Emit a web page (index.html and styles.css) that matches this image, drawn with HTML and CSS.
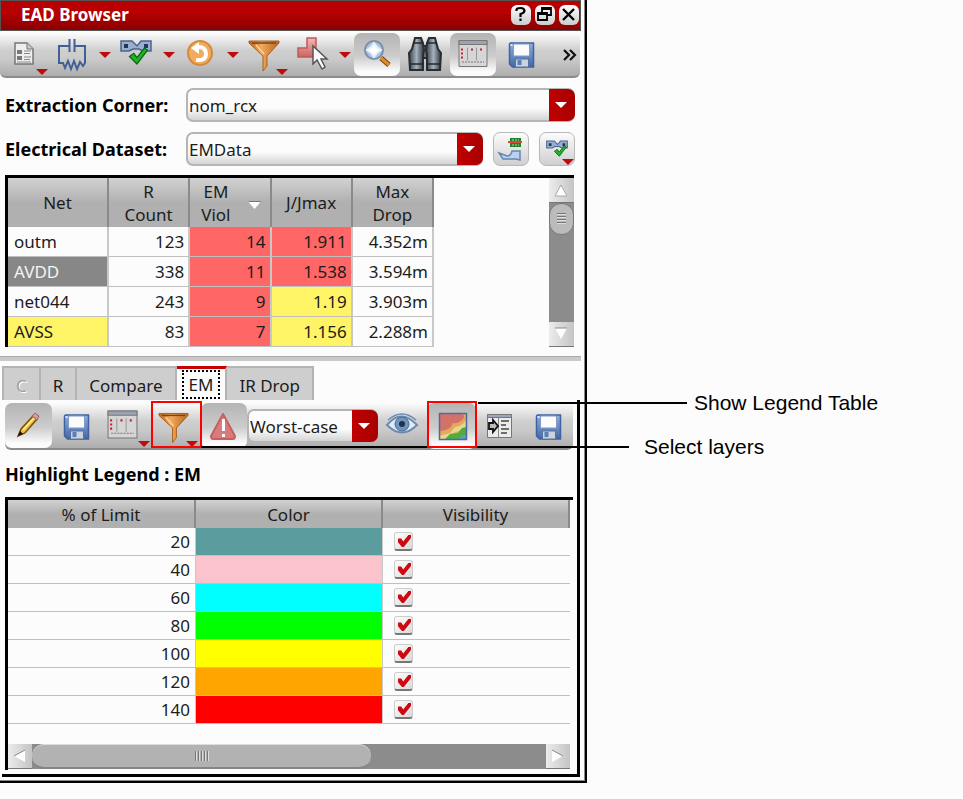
FILE: index.html
```html
<!DOCTYPE html>
<html lang="en">
<head>
<meta charset="utf-8">
<title>EAD Browser</title>
<link rel="stylesheet" href="styles.css">
</head>
<body>
<svg class="defs" aria-hidden="true">
  <defs>
    <linearGradient id="gOrange" x1="0" x2="1" y1="0" y2="0"><stop offset="0" stop-color="#b8651a"/><stop offset=".4" stop-color="#f3a95b"/><stop offset="1" stop-color="#b9681f"/></linearGradient>
    <linearGradient id="gBlue" x1="0" x2="0" y1="0" y2="1"><stop offset="0" stop-color="#8fb0da"/><stop offset="1" stop-color="#4468a4"/></linearGradient>
    <linearGradient id="gBarrel" x1="0" x2="1" y1="0" y2="0"><stop offset="0" stop-color="#3a4046"/><stop offset=".5" stop-color="#a3b1bd"/><stop offset="1" stop-color="#30363c"/></linearGradient>
    <linearGradient id="gRed" x1="0" x2="0" y1="0" y2="1"><stop offset="0" stop-color="#f2b6b4"/><stop offset="1" stop-color="#cf6262"/></linearGradient>
    <symbol id="drop" viewBox="0 0 12 6"><path d="M0 0h12L6 6z" fill="#bd0c10"/></symbol>
    <symbol id="save" viewBox="0 0 26 26">
      <path d="M2 1h23v24H4l-3-3V2z" fill="url(#gBlue)" stroke="#3f62a0" stroke-width="1.5"/>
      <path d="M5 2h16v12H5z" fill="#fbfbfb" stroke="#7f9ac8"/>
      <path d="M7 17h13v8H7z" fill="#ccd3dc" stroke="#5573a5"/><path d="M9 18h4v5H9z" fill="#5a7fb8"/><path d="M2 2h2v2H2z" fill="#dbe7f8"/>
    </symbol>
    <symbol id="funnel" viewBox="0 0 32 32">
      <path d="M1 1h30v2L19 16v10l-4 5v-15L1 3z" fill="url(#gOrange)" stroke="#a8601f" stroke-width="1"/>
      <path d="M4 3h24" stroke="#7f4210" stroke-width="1.5"/><path d="M8 5l8 9" stroke="#ffd39c" stroke-width="1.5"/>
    </symbol>
    <symbol id="panel" viewBox="0 0 30 28">
      <path d="M1 1h28v26H1z" fill="#d6d6d6" stroke="#777"/><path d="M1 1h28v4H1z" fill="#9aa4b5" stroke="#777"/>
      <path d="M9.500 8v13M18.500 8v13" stroke="#999"/><path d="M4 22.500h22" stroke="#777" stroke-dasharray="2 1"/>
      <path d="M3 9h2v2H3zM3 13h2v2H3zM3 17h2v2H3zM13 9h2v2h-2zM22 9h2v2h-2z" fill="#c22"/>
    </symbol>
    <symbol id="tick" viewBox="0 0 20 17"><path d="M2 9l4-3 3 4 7-9 3 2L9 16z" fill="#21b428" stroke="#0b6612" stroke-width="1.200"/></symbol>
    <symbol id="net" viewBox="0 0 32 12">
      <path d="M1 1h11l5 5 4-5h10v10h-8l-4-2h-6l-4 2H1z" fill="#9aafd0" stroke="#4a648f" stroke-width="1.500"/><path d="M4 4h4v4H4zM24 4h4v4h-4z" fill="#253756"/>
    </symbol>
  </defs>
</svg>

<main class="page">
  <section class="window">
    <header class="titlebar">
      <h1>EAD Browser</h1>
      <button class="winbtn" type="button" aria-label="Help"><svg width="19" height="19" viewBox="0 0 19 19"><path d="M5.500 6V4.500Q6 3 9.500 3t4 2.500Q13.500 8 9.500 9v3M9.500 13.500v2.500" fill="none" stroke="#000" stroke-width="2.200"/></svg></button>
      <button class="winbtn" type="button" aria-label="Restore"><svg width="19" height="19" viewBox="0 0 19 19"><path d="M7 7V3h9v7h-4M7 4h9M3 8h9v7H3zM3 9h9" fill="none" stroke="#000" stroke-width="1.800"/></svg></button>
      <button class="winbtn" type="button" aria-label="Close"><svg width="19" height="19" viewBox="0 0 19 19"><path d="M4 4l11 11M15 4L4 15" stroke="#000" stroke-width="2.400"/></svg></button>
    </header>

    <div class="toolbar toolbar-main">
      <button class="tool" type="button" aria-label="Report"><svg width="52" height="44" viewBox="0 0 52 44">
        <path d="M15 10h12l6 6v15H15z" fill="#eee" stroke="#777" stroke-width="1.500"/><path d="M27 10v6h6" fill="#ccc" stroke="#777"/>
        <path d="M17 17h5v4h-5zM17 23h5v4h-5z" fill="#777"/><path d="M24 18h7M24 20.500h6M24 24h7M24 26.500h6M17 29h14" stroke="#888"/>
        <use href="#drop" x="36" y="36" width="12" height="6"/></svg></button>
      <button class="tool" type="button" aria-label="Parasitics"><svg width="64" height="44" viewBox="52 0 64 44">
        <path d="M69.500 6v13M74.500 6v13M69 13H59v17h4l2 5 3-7 3 8 3-8 3 8 3-7 3 4 2-3V13H75" fill="none" stroke="#416096" stroke-width="2"/>
        <use href="#drop" x="99" y="19" width="12" height="6"/></svg></button>
      <button class="tool" type="button" aria-label="Check nets"><svg width="64" height="44" viewBox="116 0 64 44">
        <use href="#net" x="120" y="7" width="32" height="12"/><use href="#tick" x="127" y="14" width="22" height="18"/>
        <use href="#drop" x="163" y="19" width="12" height="6"/></svg></button>
      <button class="tool" type="button" aria-label="Refresh"><svg width="64" height="44" viewBox="180 0 64 44">
        <circle cx="200" cy="20" r="12" fill="#f0ab5e" stroke="#d58a3c" stroke-width="2"/>
        <path d="M196 27q10 1 10-6t-8-7" fill="none" stroke="#fff" stroke-width="4"/><path d="M191 15l8-6v12z" fill="#fff"/>
        <use href="#drop" x="227" y="19" width="12" height="6"/></svg></button>
      <button class="tool" type="button" aria-label="Filter"><svg width="48" height="44" viewBox="244 0 48 44">
        <use href="#funnel" x="248" y="7" width="32" height="32"/><use href="#drop" x="276" y="36" width="12" height="6"/></svg></button>
      <button class="tool" type="button" aria-label="Select shape"><svg width="62" height="44" viewBox="292 0 62 44">
        <path d="M307 5h9v19h-18v-9h9z" fill="url(#gRed)" stroke="#c05a5a" stroke-width="1.500"/>
        <path d="M313 13v18l4-4 5 9 3-2-4-8h6z" fill="#fbfbfb" stroke="#555" stroke-width="1.500"/>
        <use href="#drop" x="339" y="19" width="12" height="6"/></svg></button>
      <button class="tool pressed" type="button" aria-label="Zoom"><svg width="46" height="44" viewBox="354 0 46 44">
        <path d="M381 25l8 7" stroke="#7e4310" stroke-width="5"/><path d="M381 25l8 7" stroke="#e28a28" stroke-width="3"/>
        <circle cx="374" cy="17" r="9" fill="#a9c3e2" stroke="#7c8ea5" stroke-width="2"/>
        <path d="M374 10l3 4 4 3-4 3-3 4-3-4-4-3 4-3z" fill="#fff" stroke="#e6effa" stroke-width="2"/></svg></button>
      <button class="tool" type="button" aria-label="Find"><svg width="50" height="44" viewBox="400 0 50 44">
        <g stroke="#292d31" stroke-width="2"><path d="M421 13h8v12h-8z" fill="#68727c"/>
        <path d="M415 5h6l2 5 1 7-1 5v15h-13l-1-17 3-4z" fill="url(#gBarrel)"/><path d="M429 5h6l3 11 3 4-1 17h-13V22l-1-5 1-7z" fill="url(#gBarrel)"/></g>
        <path d="M413 10h9M428 10h9M410 31h13M427 31h13" stroke="#23282c" stroke-width="1.500"/></svg></button>
      <button class="tool pressed" type="button" aria-label="Show table"><svg width="46" height="44" viewBox="450 0 46 44"><use href="#panel" x="458" y="6" width="30" height="29"/></svg></button>
      <button class="tool" type="button" aria-label="Save"><svg width="50" height="44" viewBox="496 0 50 44"><use href="#save" x="508" y="9" width="27" height="26"/></svg></button>
      <button class="tool more" type="button" aria-label="More tools"><svg width="18" height="44" viewBox="0 0 18 44"><path d="M2 17l5 5-5 5M8 17l5 5-5 5" fill="none" stroke="#111" stroke-width="2.200"/></svg></button>
    </div>

    <div class="field">
      <label for="corner">Extraction Corner:</label>
      <span class="combo"><select id="corner"><option>nom_rcx</option></select></span>
    </div>
    <div class="field">
      <label for="dataset">Electrical Dataset:</label>
      <span class="combo"><select id="dataset"><option>EMData</option></select></span>
      <button class="sidebtn" type="button" aria-label="Load dataset"><svg width="34" height="34" viewBox="0 0 34 34">
        <path d="M16 5h11v9H16z" fill="#24812a"/><path d="M18 7h7M18 12h7" stroke="#a7e29c" stroke-dasharray="2 1"/><path d="M14 9h14" stroke="#d44" stroke-width="2"/>
        <path d="M5 20l8 3q4 0 5-5h8v9l-4-1H9z" fill="#b9d2ef" stroke="#6687b1" stroke-width="1.500"/></svg></button>
      <button class="sidebtn" type="button" aria-label="Check dataset"><svg width="34" height="34" viewBox="0 0 34 34">
        <use href="#net" x="6" y="7" width="22" height="9"/><use href="#tick" x="12" y="12" width="16" height="12"/><use href="#drop" x="22" y="26" width="12" height="6"/></svg></button>
    </div>

    <div class="frame net-frame">
      <table class="grid nets">
        <thead><tr><th>Net</th><th>R<br>Count</th><th class="sorted">EM<br>Viol</th><th>J/Jmax</th><th>Max<br>Drop</th></tr></thead>
        <tbody>
          <tr><td>outm</td><td>123</td><td class="bad">14</td><td class="bad">1.911</td><td>4.352m</td></tr>
          <tr><td class="selected">AVDD</td><td>338</td><td class="bad">11</td><td class="bad">1.538</td><td>3.594m</td></tr>
          <tr><td>net044</td><td>243</td><td class="bad">9</td><td class="warn">1.19</td><td>3.903m</td></tr>
          <tr><td class="warn">AVSS</td><td>83</td><td class="bad">7</td><td class="warn">1.156</td><td>2.288m</td></tr>
        </tbody>
      </table>
      <div class="vscroll">
        <button type="button" aria-label="Scroll up"><svg width="24" height="24" viewBox="0 0 24 24"><path d="M6 18l6-11 6 11z" fill="#fff" stroke="#aaa"/></svg></button>
        <div class="vtrack"><div class="vthumb"></div></div>
        <button type="button" aria-label="Scroll down"><svg width="24" height="24" viewBox="0 0 24 24"><path d="M6 6l6 11 6-11z" fill="#fff"/><path d="M6 6h12" stroke="#888"/></svg></button>
      </div>
    </div>

    <div class="splitter"></div>

    <nav class="tabs">
      <button class="tab" type="button" disabled>C</button>
      <button class="tab" type="button">R</button>
      <button class="tab" type="button">Compare</button>
      <button class="tab active" type="button"><span>EM</span></button>
      <button class="tab" type="button">IR Drop</button>
    </nav>

    <div class="pane">
      <div class="toolbar toolbar-em">
        <button class="tool pressed" type="button" aria-label="Edit"><svg width="47" height="46" viewBox="5 0 47 46">
          <path d="M18 33l3-7L33 13l4 3-12 14z" fill="#f0bd36" stroke="#775019" stroke-width="1.500"/><path d="M23 27l11-12" stroke="#fff0a0" stroke-width="1.500"/><path d="M32 13l3-3 4 3-2 4z" fill="#d99a94" stroke="#966"/><path d="M18 33l2-5 3 3z" fill="#111"/></svg></button>
        <button class="tool" type="button" aria-label="Save"><svg width="52" height="46" viewBox="52 0 52 46"><use href="#save" x="63" y="11" width="27" height="26"/></svg></button>
        <button class="tool" type="button" aria-label="Table columns"><svg width="47" height="46" viewBox="104 0 47 46"><use href="#panel" x="107" y="7" width="31" height="29"/><use href="#drop" x="138" y="38" width="12" height="6"/></svg></button>
        <div class="marked"><button class="tool" type="button" aria-label="Select layers"><svg width="50" height="46" viewBox="151 0 50 46"><use href="#funnel" x="158" y="9" width="31" height="32"/><use href="#drop" x="186" y="38" width="12" height="6"/></svg></button>
          <div class="callout callout-layers">Select layers</div></div>
        <button class="tool pressed" type="button" aria-label="Violations"><svg width="46" height="46" viewBox="201 0 46 46">
          <path d="M223 11l12 22q0 3-2 3h-20q-2 0-2-3z" fill="#d87b7b" stroke="#c46262" stroke-width="2" stroke-linejoin="round"/><path d="M223.500 16v12M223.500 31v3" stroke="#fff" stroke-width="3"/></svg></button>
        <span class="combo"><select id="mode" aria-label="Analysis mode"><option>Worst-case</option></select></span>
        <button class="tool" type="button" aria-label="Visibility"><svg width="49" height="46" viewBox="378 0 49 46">
          <path d="M387 22q14-17 30 0q-15 15-30 0z" fill="#e2ebf3" stroke="#6c8bad" stroke-width="2"/><circle cx="402" cy="21" r="7" fill="#7195bd" stroke="#456b99"/><circle cx="402" cy="21" r="3" fill="#1d3453"/><path d="M388 17q14-12 28 0" fill="none" stroke="#6c8bad" stroke-width="1.500"/></svg></button>
        <div class="marked short"><button class="tool pressed" type="button" aria-label="Show Legend Table"><svg width="49" height="46" viewBox="427 0 49 46">
          <path d="M439 10h28v27h-28z" fill="#e3a95a"/><path d="M439 10h22q5 2 2 6-4 5-10 4-3 8-14 8z" fill="#d4726a"/><path d="M467 15q-3 8-12 9l-5 6-11 3v4h7l5-6 10-4 6-4z" fill="#ecd48e"/><path d="M444 37l6-6 8-1 4-5 5-1v13z" fill="#4eae3d"/><path d="M458 37l4-5h5v5z" fill="#6596c0"/><path d="M439.500 10.500h27v26h-27z" fill="none" stroke="#4e68a0" stroke-width="1.500"/></svg></button>
          <div class="callout callout-legend">Show Legend Table</div></div>
        <button class="tool" type="button" aria-label="Export report"><svg width="49" height="46" viewBox="476 0 49 46">
          <path d="M487.500 11.500h24v23h-24z" fill="#ececec" stroke="#777"/><path d="M487.500 11.500h24v3h-24z" fill="#9ba7b9" stroke="#777"/><path d="M498.500 15v19" stroke="#888"/><path d="M501 18h8M501 22h5M501 26h8M501 30h6" stroke="#444" stroke-width="1.500"/>
          <path d="M489 20h4v-3l5 6-5 6v-3h-4z" fill="#bbb" stroke="#111" stroke-width="1.800"/></svg></button>
        <button class="tool" type="button" aria-label="Save legend"><svg width="48" height="46" viewBox="525 0 48 46"><use href="#save" x="535" y="11" width="27" height="26"/></svg></button>
      </div>

      <h2>Highlight Legend : EM</h2>

      <div class="frame legend-frame">
        <table class="grid legend">
          <thead><tr><th>% of Limit</th><th>Color</th><th>Visibility</th></tr></thead>
          <tbody>
            <tr><td>20</td><td class="teal"></td><td><input type="checkbox" checked aria-label="Show 20"></td></tr>
            <tr><td>40</td><td class="pink"></td><td><input type="checkbox" checked aria-label="Show 40"></td></tr>
            <tr><td>60</td><td class="cyan"></td><td><input type="checkbox" checked aria-label="Show 60"></td></tr>
            <tr><td>80</td><td class="green"></td><td><input type="checkbox" checked aria-label="Show 80"></td></tr>
            <tr><td>100</td><td class="yellow"></td><td><input type="checkbox" checked aria-label="Show 100"></td></tr>
            <tr><td>120</td><td class="orange"></td><td><input type="checkbox" checked aria-label="Show 120"></td></tr>
            <tr><td>140</td><td class="red"></td><td><input type="checkbox" checked aria-label="Show 140"></td></tr>
          </tbody>
        </table>
        <div class="hscroll">
          <button type="button" aria-label="Scroll left"><svg width="24" height="24" viewBox="0 0 24 24"><path d="M17 6L6 12l11 6z" fill="#fff"/><path d="M17 6L6 12" stroke="#888"/></svg></button>
          <div class="htrack"><div class="hthumb"></div></div>
          <button type="button" aria-label="Scroll right"><svg width="24" height="24" viewBox="0 0 24 24"><path d="M6 6l11 6-11 6z" fill="#fff"/><path d="M6 6l11 6" stroke="#888"/></svg></button>
        </div>
      </div>
    </div>
  </section>
</main>
</body>
</html>
```
FILE: styles.css
```css
* { box-sizing: border-box; }

body {
  margin: 0;
  background: #fcfcfc;
  color: #1c1c1c;
  font: 17px/23px "Noto Sans", "Open Sans", sans-serif;
}

button, select { font: inherit; color: inherit; }
button { margin: 0; padding: 0; border: 0; background: none; }
svg { display: block; }
.defs { position: absolute; width: 0; height: 0; }

.page {
  display: grid;
  grid-template-columns: minmax(0, 587px) 1fr;
  align-items: start;
}

.window {
  border-right: 2px solid #000;
  border-bottom: 2px solid #000;
  box-shadow: inset -1px -1px #888;
  padding-bottom: 4px;
}

/* Title bar */
.titlebar {
  display: flex;
  align-items: center;
  gap: 4px;
  height: 31px;
  margin-right: 4px;
  padding: 0 1px 2px 20px;
  border: 1px solid #555;
  background: linear-gradient(#b80000 40%, #8a0000);
}
.titlebar h1 {
  flex: 1;
  margin: 0;
  color: #fff;
  font-size: 17px;
  line-height: 23px;
}
.winbtn {
  width: 20px;
  height: 20px;
  border-radius: 6px;
  background: linear-gradient(#fff, #ccc);
}

/* Toolbars */
.toolbar {
  display: flex;
  border-bottom: 2px solid #8c8c8c;
  border-radius: 0 0 6px 6px;
  background: linear-gradient(#fcfcfc, #cfcfcf 40%, #cacaca 60%, #adadad);
}
.toolbar-main { height: 45px; margin: 2px 5px 10px 0; }
.toolbar-em { height: 47px; margin: 0 4px 0 3px; }
.tool { flex: none; }
.pressed {
  border-radius: 7px;
  background: linear-gradient(#b4b4b4, #cdcdcd 55%, #fcfcfc 90%);
}
.more { margin-left: auto; }

/* Form rows */
.field {
  display: flex;
  align-items: center;
  gap: 10px;
  margin: 0 10px 10px 5px;
}
.field label {
  width: 171px;
  color: #000;
  font-size: 18px;
  font-weight: bold;
}
.combo {
  position: relative;
  flex: 1;
  height: 34px;
}
.combo select {
  width: 100%;
  height: 100%;
  padding: 0 30px 0 1px;
  appearance: none;
  border: 2px solid #b5b5b5;
  border-radius: 7px;
  background: linear-gradient(#fcfcfc 60%, #d4d4d4);
}
.combo::before {
  content: "";
  position: absolute;
  inset: 1px 0 1px auto;
  width: 26px;
  border-radius: 0 7px 7px 0;
  background: linear-gradient(90deg, #c00000, #a80000);
  pointer-events: none;
}
.combo::after {
  content: "";
  position: absolute;
  top: 14px;
  right: 8px;
  width: 12px;
  height: 6px;
  background: #fff;
  clip-path: polygon(0 0, 100% 0, 50% 100%);
  pointer-events: none;
}
.toolbar .combo { margin-top: 6px; }
.sidebtn {
  display: grid;
  place-items: center;
  width: 36px;
  height: 34px;
  border: 1px solid #b8b8b8;
  border-radius: 7px;
  background: linear-gradient(#fcfcfc, #cfcfcf);
}

/* Tables */
.frame {
  border-top: 3px solid #000;
  border-left: 3px solid #000;
}
.grid {
  border-collapse: separate;
  border-spacing: 0;
  table-layout: fixed;
}
.grid th {
  padding: 0;
  border-right: 2px solid #8a8a8a;
  background: linear-gradient(#d2d2d2, #b0b0b0 50%);
  font-weight: normal;
}
.grid td {
  border-right: 2px solid #c8c8c8;
  border-bottom: 1px solid #c0c0c0;
  text-align: right;
}

.net-frame {
  display: flex;
  justify-content: space-between;
  margin: -1px 11px 9px 5px;
}
.nets { width: 426px; }
.nets th { height: 49px; }
.nets td { height: 30px; padding: 0 4px; }
.nets th:first-child { width: 101px; }
.nets td:first-child { padding-left: 6px; text-align: left; }
.nets th.sorted { position: relative; padding-right: 28px; }
.sorted::before,
.sorted::after {
  content: "";
  position: absolute;
  top: 23px;
  right: 9px;
  width: 12px;
  height: 1px;
  background: #777;
}
.sorted::after {
  top: 24px;
  height: 7px;
  background: #fff;
  clip-path: polygon(0 0, 100% 0, 50% 100%);
}
.nets .bad { background: #ff6666; }
.nets .warn { background: #fff466; }
.nets .selected { background: #878787; color: #f4f4f4; }

/* Scroll bars */
.vscroll { display: flex; flex-direction: column; width: 25px; }
.vscroll button, .hscroll button {
  border-bottom: 1px solid #777;
  background: linear-gradient(90deg, #ececec, #c4c4c4);
}
.vtrack, .htrack { flex: 1; background: #8c8c8c; }
.vthumb {
  height: 32px;
  border: 1px solid #777;
  border-radius: 12px;
  background:
    repeating-linear-gradient(#777 0 1px, #ddd 1px 2px, #bbb 2px 3px) center / 9px 12px no-repeat,
    #bbb;
}
.hscroll { display: flex; height: 25px; margin-top: 20px; }
.hthumb {
  width: 66%;
  height: 25px;
  border-top: 1px solid #ddd;
  border-bottom: 2px solid #858585;
  border-radius: 12px;
  background:
    repeating-linear-gradient(90deg, #777 0 1px, #ddd 1px 2px, #b2b2b2 2px 3px) center / 14px 10px no-repeat,
    #b2b2b2;
}

.splitter {
  height: 5px;
  margin-right: 4px;
  border-top: 1px solid #aaa;
  background: #cacaca;
}

/* Tabs */
.tabs {
  display: flex;
  height: 34px;
  margin: 5px 0 0 2px;
}
.tab {
  padding: 3px 12px 0;
  border-top: 2px solid #b4b4b4;
  border-right: 2px solid #b4b4b4;
  background: #cecece;
}
.tab:first-child { border-left: 2px solid #b4b4b4; }
.tab:disabled { color: #a0a0a0; text-shadow: 1px 1px #fff; }
.tab.active {
  padding: 0 5px;
  border-top: 3px solid #c80000;
  background: #fcfcfc;
}
.tab.active span {
  display: block;
  padding: 1px 5px;
  border: 2px dotted #000;
}

/* EM pane */
.pane {
  margin: 0 5px 0 2px;
  padding: 3px 0 4px;
  border-right: 3px solid #000;
  border-bottom: 3px solid #000;
}
.pane h2 {
  margin: 0;
  padding: 2px 0 0 3px;
  color: #000;
  font-size: 18px;
  line-height: 45px;
}
.legend-frame { margin: 0 4px 0 3px; padding: 0 3px 1px 0; }
.legend { width: 100%; }
.legend th { height: 28px; }
.legend th:first-child { width: 188px; }
.legend td { height: 28px; padding: 0 5px; border-right-width: 1px; }
.legend td:last-child {
  border-right: 0;
  padding-left: 11px;
  text-align: left;
}
.teal { background: #5b9c9e; }
.pink { background: #fbc3cc; }
.cyan { background: #00ffff; }
.green { background: #00ff00; }
.yellow { background: #ffff00; }
.orange { background: #ffa500; }
.red { background: #ff0000; }

input[type="checkbox"] {
  display: block;
  width: 19px;
  height: 19px;
  margin: 0;
  appearance: none;
  border: 1px solid #ccc;
  border-bottom: 2px solid #777;
  border-radius: 3px;
  background: linear-gradient(135deg, #fff, #d8d8d8);
}
input[type="checkbox"]:checked::before {
  content: "";
  display: block;
  width: 13px;
  height: 12px;
  margin: 2px 0 0 3px;
  background: #cc0a10;
  clip-path: polygon(0 30%, 25% 30%, 40% 55%, 80% 0, 100% 0, 100% 25%, 45% 100%, 30% 100%, 0 60%);
}

/* Annotations over the toolbar */
.marked { position: relative; }
.marked::before {
  content: "";
  position: absolute;
  inset: -2px -1px 0 0;
  border: 2px solid #f00;
  pointer-events: none;
}
.callout {
  position: absolute;
  left: 100%;
  display: flex;
  align-items: center;
  color: #000;
  font: 21px/24px "Liberation Sans", Arial, sans-serif;
  white-space: nowrap;
  pointer-events: none;
}
.callout::before {
  content: "";
  height: 2px;
  background: #000;
}
.callout-layers { top: 32px; gap: 15px; }
.callout-layers::before { width: 428px; }
.callout-legend { top: -12px; gap: 7px; }
.callout-legend::before { width: 209px; margin-left: 2px; }
```
